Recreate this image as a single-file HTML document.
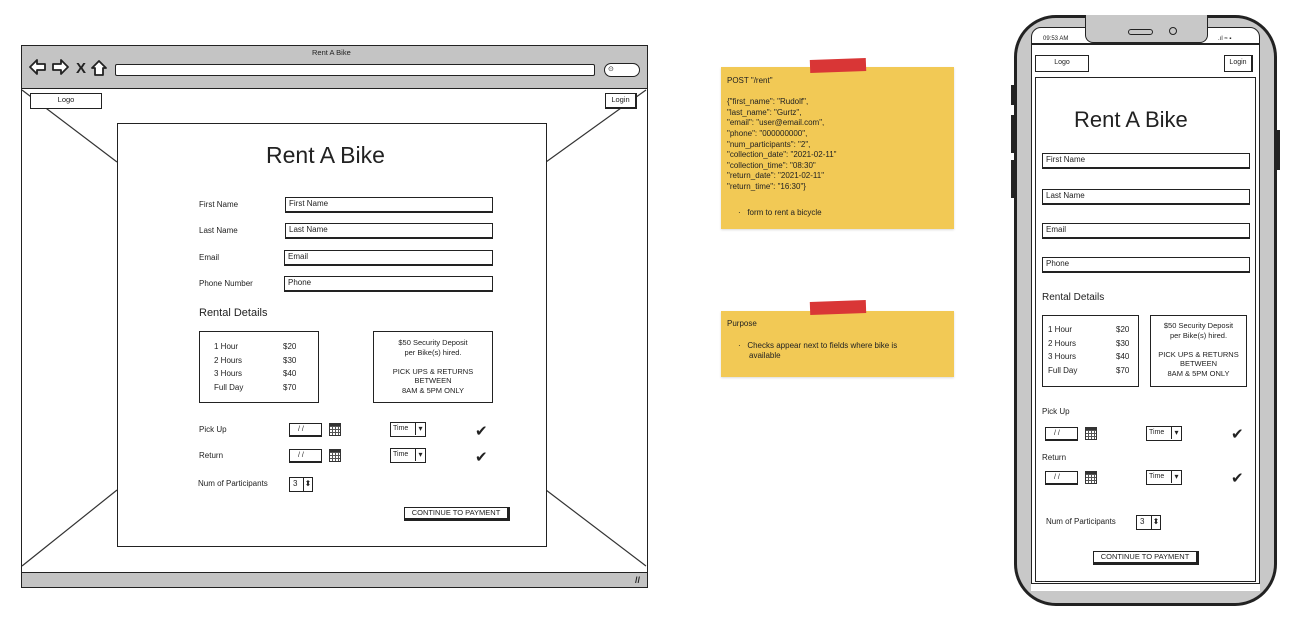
<!DOCTYPE html>
<html><head><meta charset="utf-8"><style>
*{margin:0;padding:0;box-sizing:border-box}
body{width:1290px;height:622px;background:#fff;position:relative;overflow:hidden;font-family:"Liberation Sans",sans-serif;color:#222}
.a{position:absolute}
.bx{position:absolute;border:1.5px solid #222;background:#fff}
.t{position:absolute;font-size:8px;white-space:nowrap;line-height:10px}
.in{position:absolute;border:1.5px solid #222;border-bottom-width:2px;background:#fff;font-size:8px;padding-left:3px;line-height:12px}
.sel{position:absolute;border:1.5px solid #222;background:#fff;font-size:7px;line-height:12px;padding-left:2px}
.sel:after{content:"▾";position:absolute;right:0;top:0;width:9px;height:12px;border-left:1.5px solid #222;text-align:center;font-size:8px}
.cal{position:absolute;width:12px;height:13px;border:1.5px solid #333;border-top-width:3px;background:repeating-linear-gradient(90deg,transparent 0 2px,#555 2px 3px),repeating-linear-gradient(0deg,#fff 0 2px,#555 2px 3px)}
.chk{position:absolute;font-size:15px;line-height:14px;font-family:"DejaVu Sans",sans-serif;font-weight:bold}
.btn{position:absolute;border:1.5px solid #222;border-right-width:3px;border-bottom-width:3px;background:#fff;font-size:7.5px;text-align:center;line-height:10px}
.spin{position:absolute;border:1.5px solid #222;font-size:8px;line-height:12px;padding-left:3px;background:#fff}
.spin:after{content:"⬍";position:absolute;right:0;top:0;width:8px;height:100%;border-left:1px solid #222;font-size:8px;text-align:center;color:#222}
.sticky{position:absolute;background:#f2c955;box-shadow:0 1px 2px rgba(0,0,0,.15)}
.tape{position:absolute;background:#d93636;transform:rotate(-2deg)}
</style></head><body>

<!-- Browser -->
<div class="a" style="left:21px;top:45px;width:627px;height:543px;border:1.5px solid #222;background:#fff"></div>
<div class="a" style="left:22px;top:46px;width:625px;height:43px;background:#c4c4c4;border-bottom:1.5px solid #222"></div>
<div class="t" style="left:312px;top:48px;font-size:7.5px">Rent A Bike</div>
<svg class="a" style="left:28px;top:58px" width="80" height="20"><g fill="#fff" stroke="#222" stroke-width="1.8" stroke-linejoin="round">
<path d="M2 9 L9 2 V6 H17 V12 H9 V16 Z"/><path d="M40 9 L33 2 V6 H25 V12 H33 V16 Z"/>
<path d="M64 10 L71 3 L78 10 H75 V17 H67 V10 Z"/></g>
<text x="48" y="15" font-family="Liberation Sans" font-weight="bold" font-size="15" fill="#222">X</text></svg>
<div class="a" style="left:115px;top:64px;width:480px;height:12px;border:1.5px solid #222;background:#fff;border-radius:2px"></div>
<div class="a" style="left:604px;top:63px;width:36px;height:14px;border:1.5px solid #222;background:#fff;border-radius:8px;font-size:7px;padding-left:3px;line-height:11px">⊙</div>
<div class="a" style="left:22px;top:572px;width:625px;height:15px;background:#c4c4c4;border-top:1.5px solid #222"></div>
<div class="t" style="left:635px;top:575px;font-size:9px;font-weight:bold">//</div>
<svg class="a" style="left:0;top:0" width="1290" height="622">
<g stroke="#333" stroke-width="1.2">
<line x1="22" y1="90" x2="117" y2="162"/><line x1="646" y1="90" x2="546" y2="162"/>
<line x1="22" y1="566" x2="117" y2="490"/><line x1="646" y1="566" x2="546" y2="490"/>
<line x1="1032" y1="75" x2="1036" y2="80"/><line x1="1258" y1="75" x2="1254" y2="80"/>
<line x1="1032" y1="590" x2="1036" y2="580"/><line x1="1258" y1="590" x2="1254" y2="580"/>
</g></svg>
<div class="bx" style="left:30px;top:93px;width:72px;height:16px;font-size:7.5px;text-align:center;line-height:12px">Logo</div>
<div class="bx" style="left:605px;top:93px;width:32px;height:16px;font-size:7.5px;text-align:center;line-height:12px;border-right-width:2.5px;border-bottom-width:2.5px">Login</div>

<div class="bx" style="left:117px;top:123px;width:430px;height:424px"></div>
<div class="t" style="left:266px;top:141px;font-size:23px;line-height:28px">Rent A Bike</div>
<div class="t" style="left:199px;top:200px">First Name</div><div class="in" style="left:285px;top:197px;width:208px;height:16px">First Name</div>
<div class="t" style="left:199px;top:226px">Last Name</div><div class="in" style="left:285px;top:223px;width:208px;height:16px">Last Name</div>
<div class="t" style="left:199px;top:253px">Email</div><div class="in" style="left:284px;top:250px;width:209px;height:16px">Email</div>
<div class="t" style="left:199px;top:279px">Phone Number</div><div class="in" style="left:284px;top:276px;width:209px;height:16px">Phone</div>
<div class="t" style="left:199px;top:307px;font-size:11px;line-height:13px">Rental Details</div>
<div class="bx" style="left:199px;top:331px;width:120px;height:72px"></div>
<div class="t" style="left:214px;top:340px;line-height:13.7px">1 Hour<br>2 Hours<br>3 Hours<br>Full Day</div>
<div class="t" style="left:283px;top:340px;line-height:13.7px">$20<br>$30<br>$40<br>$70</div>
<div class="bx" style="left:373px;top:331px;width:120px;height:72px"></div>
<div class="t" style="left:373px;top:338px;width:120px;text-align:center;line-height:9.5px;font-size:7.5px">$50 Security Deposit<br>per Bike(s) hired.<br><br>PICK UPS &amp; RETURNS<br>BETWEEN<br>8AM &amp; 5PM ONLY</div>
<div class="t" style="left:199px;top:425px">Pick Up</div>
<div class="in" style="left:289px;top:423px;width:33px;height:14px;font-size:7px;padding-left:8px;line-height:11px">/ /</div>
<div class="cal" style="left:329px;top:423px"></div>
<div class="sel" style="left:390px;top:422px;width:36px;height:15px">Time</div>
<div class="chk" style="left:475px;top:424px">✔</div>
<div class="t" style="left:199px;top:451px">Return</div>
<div class="in" style="left:289px;top:449px;width:33px;height:14px;font-size:7px;padding-left:8px;line-height:11px">/ /</div>
<div class="cal" style="left:329px;top:449px"></div>
<div class="sel" style="left:390px;top:448px;width:36px;height:15px">Time</div>
<div class="chk" style="left:475px;top:450px">✔</div>
<div class="t" style="left:198px;top:479px">Num of Participants</div>
<div class="spin" style="left:289px;top:477px;width:24px;height:15px">3</div>
<div class="btn" style="left:404px;top:507px;width:106px;height:14px">CONTINUE TO PAYMENT</div>

<!-- Stickies -->
<div class="sticky" style="left:721px;top:67px;width:233px;height:162px"></div>
<div class="tape" style="left:810px;top:59px;width:56px;height:13px"></div>
<div class="t" style="left:727px;top:76px;line-height:10.6px">POST "/rent"<br><br>{"first_name": "Rudolf",<br>"last_name": "Gurtz",<br>"email": "user@email.com",<br>"phone": "000000000",<br>"num_participants": "2",<br>"collection_date": "2021-02-11"<br>"collection_time": "08:30"<br>"return_date": "2021-02-11"<br>"return_time": "16:30"}</div>
<div class="t" style="left:738px;top:208px">·&nbsp;&nbsp;&nbsp;form to rent a bicycle</div>
<div class="sticky" style="left:721px;top:311px;width:233px;height:66px"></div>
<div class="tape" style="left:810px;top:301px;width:56px;height:13px"></div>
<div class="t" style="left:727px;top:319px">Purpose</div>
<div class="t" style="left:738px;top:341px">·&nbsp;&nbsp;&nbsp;Checks appear next to fields where bike is</div>
<div class="t" style="left:749px;top:351px">available</div>

<!-- Phone -->
<div class="a" style="left:1014px;top:15px;width:263px;height:591px;border:3px solid #222;border-radius:42px;background:#c8c8c8"></div>
<div class="a" style="left:1011px;top:85px;width:3px;height:20px;background:#222"></div>
<div class="a" style="left:1011px;top:115px;width:3px;height:38px;background:#222"></div>
<div class="a" style="left:1011px;top:160px;width:3px;height:38px;background:#222"></div>
<div class="a" style="left:1277px;top:130px;width:3px;height:40px;background:#222"></div>
<div class="a" style="left:1031px;top:27px;width:229px;height:564px;background:#fff;border:1.5px solid #222;border-radius:10px 10px 0 0"></div>
<div class="a" style="left:1085px;top:15px;width:123px;height:28px;background:#c8c8c8;border:1.5px solid #222;border-top:none;border-radius:0 0 8px 8px"></div>
<div class="a" style="left:1128px;top:29px;width:25px;height:6px;border:1.5px solid #222;border-radius:4px"></div>
<div class="a" style="left:1169px;top:27px;width:8px;height:8px;border:1.5px solid #222;border-radius:50%"></div>
<div class="t" style="left:1043px;top:34px;font-size:6px">09:53 AM</div>
<div class="t" style="left:1218px;top:34px;font-size:6px">.ıl ≈ ▪</div>
<div class="a" style="left:1031px;top:43px;width:229px;height:1.5px;background:#222"></div>
<div class="bx" style="left:1035px;top:55px;width:54px;height:17px;font-size:7px;text-align:center;line-height:13px">Logo</div>
<div class="bx" style="left:1224px;top:55px;width:29px;height:17px;font-size:7px;text-align:center;line-height:13px;border-right-width:2.5px">Login</div>
<div class="bx" style="left:1035px;top:77px;width:221px;height:505px"></div>
<div class="a" style="left:1031px;top:583px;width:229px;height:8px;background:#fff;border-top:1.5px solid #222"></div>
<div class="t" style="left:1074px;top:107px;font-size:22px;line-height:26px">Rent A Bike</div>
<div class="in" style="left:1042px;top:153px;width:208px;height:16px">First Name</div>
<div class="in" style="left:1042px;top:189px;width:208px;height:16px">Last Name</div>
<div class="in" style="left:1042px;top:223px;width:208px;height:16px">Email</div>
<div class="in" style="left:1042px;top:257px;width:208px;height:16px">Phone</div>
<div class="t" style="left:1042px;top:292px;font-size:10px;line-height:12px">Rental Details</div>
<div class="bx" style="left:1042px;top:315px;width:97px;height:72px"></div>
<div class="t" style="left:1048px;top:323px;line-height:13.5px">1 Hour<br>2 Hours<br>3 Hours<br>Full Day</div>
<div class="t" style="left:1116px;top:323px;line-height:13.5px">$20<br>$30<br>$40<br>$70</div>
<div class="bx" style="left:1150px;top:315px;width:97px;height:72px"></div>
<div class="t" style="left:1150px;top:321px;width:97px;text-align:center;line-height:9.6px;font-size:7.5px">$50 Security Deposit<br>per Bike(s) hired.<br><br>PICK UPS &amp; RETURNS<br>BETWEEN<br>8AM &amp; 5PM ONLY</div>
<div class="t" style="left:1042px;top:407px">Pick Up</div>
<div class="in" style="left:1045px;top:427px;width:33px;height:14px;font-size:7px;padding-left:8px;line-height:11px">/ /</div>
<div class="cal" style="left:1085px;top:427px"></div>
<div class="sel" style="left:1146px;top:426px;width:36px;height:15px">Time</div>
<div class="chk" style="left:1231px;top:427px">✔</div>
<div class="t" style="left:1042px;top:453px">Return</div>
<div class="in" style="left:1045px;top:471px;width:33px;height:14px;font-size:7px;padding-left:8px;line-height:11px">/ /</div>
<div class="cal" style="left:1085px;top:471px"></div>
<div class="sel" style="left:1146px;top:470px;width:36px;height:15px">Time</div>
<div class="chk" style="left:1231px;top:471px">✔</div>
<div class="t" style="left:1046px;top:517px">Num of Participants</div>
<div class="spin" style="left:1136px;top:515px;width:25px;height:15px">3</div>
<div class="btn" style="left:1093px;top:551px;width:106px;height:14px">CONTINUE TO PAYMENT</div>
</body></html>
